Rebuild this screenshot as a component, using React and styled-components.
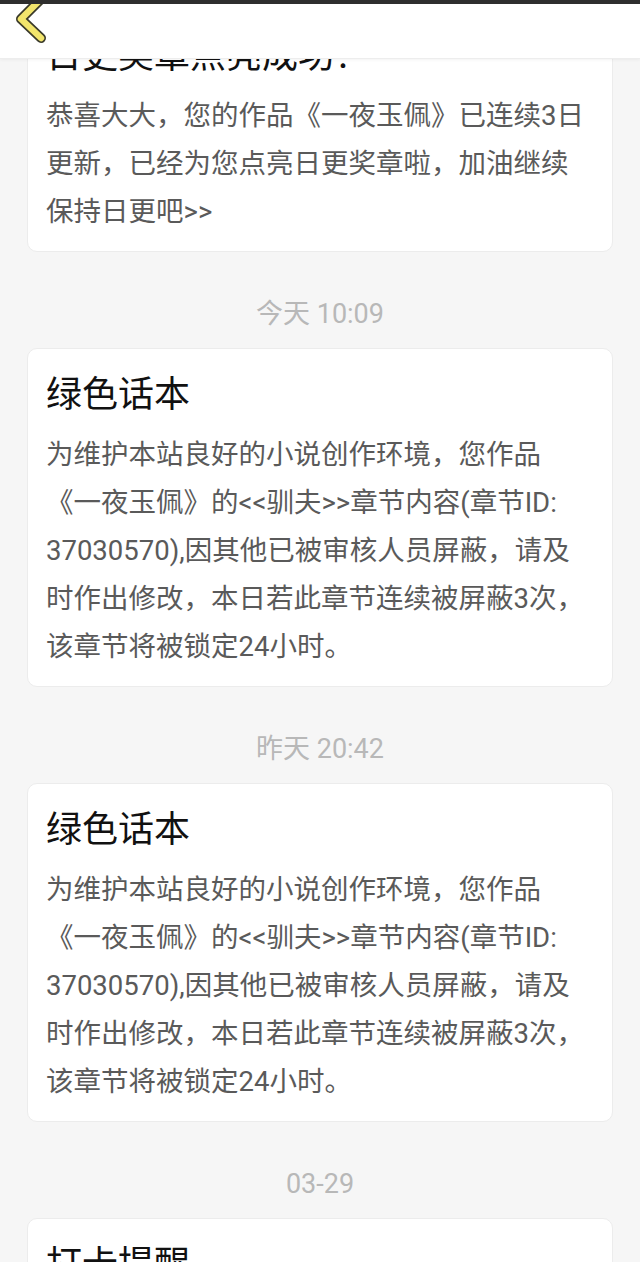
import React from 'react';
import styled, { createGlobalStyle } from 'styled-components';

const GlobalStyle = createGlobalStyle`
  html, body {
    margin: 0;
    padding: 0;
    background-color: #f6f6f6;
  }
  body {
    font-family: Roboto, "Noto Sans CJK SC", "Noto Sans", sans-serif;
  }
`;

const Header = styled.header`
  position: fixed;
  top: 0;
  left: 0;
  right: 0;
  height: 54px;
  z-index: 10;
  display: flex;
  align-items: flex-start;
  padding-left: 14px;
  background-color: #ffffff;
  border-top: 4px solid #2e2e2e;
  border-bottom: 1px solid #ededed;
  box-shadow: 0 1px 3px rgba(0, 0, 0, 0.05);
  overflow: hidden;
`;

const BackButton = styled.button`
  display: block;
  width: 34px;
  height: 40px;
  padding: 0;
  border: none;
  background: none;
  cursor: pointer;
`;

const List = styled.main`
  display: flex;
  flex-direction: column;
  padding: 9px 27px 40px;
`;

const TimeLabel = styled.div`
  margin: 44px 0 16px;
  height: 36px;
  line-height: 36px;
  text-align: center;
  font-size: 27px;
  color: #b8b8b8;
`;

const Card = styled.section`
  background-color: #ffffff;
  border: 1px solid #ececec;
  border-radius: 10px;
  padding: 21px 22px 15px 18px;
`;

const Title = styled.h2`
  margin: 0;
  height: 50px;
  line-height: 50px;
  font-size: 36px;
  font-weight: 400;
  color: #111111;
  white-space: nowrap;
`;

const Body = styled.p`
  margin: 11px 0 0;
  font-size: 27.5px;
  line-height: 48px;
  color: #5a5a5a;
  min-height: ${props => (props.tall ? '480px' : 'auto')};
`;

const BackIcon = () => (
  <svg width="34" height="40" viewBox="0 0 34 40">
    <polyline
      points="27,-5 7,15 27,34"
      fill="none"
      stroke="#3a3a2a"
      strokeWidth="10"
      strokeLinecap="round"
      strokeLinejoin="round"
    />
    <polyline
      points="27,-5 7,15 27,34"
      fill="none"
      stroke="#f2e56c"
      strokeWidth="6.5"
      strokeLinecap="round"
      strokeLinejoin="round"
    />
  </svg>
);

// the zero-width space after "ID:" lets the id number wrap as in the app
const lockNotice =
  '为维护本站良好的小说创作环境，您作品《一夜玉佩》的<<驯夫>>章节内容(章节ID:\u200B37030570),因其他已被审核人员屏蔽，请及时作出修改，本日若此章节连续被屏蔽3次，该章节将被锁定24小时。';

const messages = [
  {
    id: 1,
    title: '日更奖章点亮成功！',
    text: '恭喜大大，您的作品《一夜玉佩》已连续3日更新，已经为您点亮日更奖章啦，加油继续保持日更吧>>',
  },
  { id: 2, time: '今天 10:09', title: '绿色话本', text: lockNotice },
  { id: 3, time: '昨天 20:42', title: '绿色话本', text: lockNotice },
  {
    id: 4,
    time: '03-29',
    title: '打卡提醒',
    text: '大大，今天还没有更新哦，记得按时更新，保持日更吧>>',
    tall: true,
  },
];

const App = () => {
  return (
    <>
      <GlobalStyle />
      <Header>
        <BackButton aria-label="返回">
          <BackIcon />
        </BackButton>
      </Header>
      <List>
        {messages.map(msg => (
          <React.Fragment key={msg.id}>
            {msg.time && <TimeLabel>{msg.time}</TimeLabel>}
            <Card>
              <Title>{msg.title}</Title>
              <Body tall={msg.tall}>{msg.text}</Body>
            </Card>
          </React.Fragment>
        ))}
      </List>
    </>
  );
};

export default App;
